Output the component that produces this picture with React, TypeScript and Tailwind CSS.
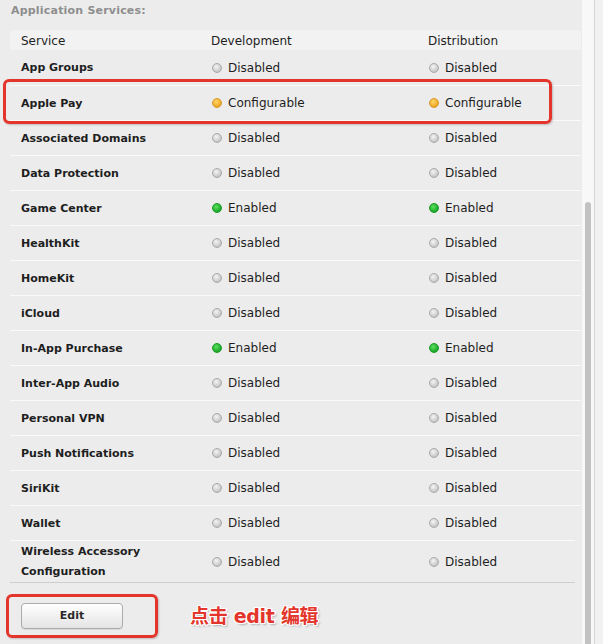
import React from 'react';

type Status = 'Disabled' | 'Configurable' | 'Enabled';

interface ServiceRow {
  name: string;
  dev: Status;
  dist: Status;
}

const services: ServiceRow[] = [
  { name: 'App Groups', dev: 'Disabled', dist: 'Disabled' },
  { name: 'Apple Pay', dev: 'Configurable', dist: 'Configurable' },
  { name: 'Associated Domains', dev: 'Disabled', dist: 'Disabled' },
  { name: 'Data Protection', dev: 'Disabled', dist: 'Disabled' },
  { name: 'Game Center', dev: 'Enabled', dist: 'Enabled' },
  { name: 'HealthKit', dev: 'Disabled', dist: 'Disabled' },
  { name: 'HomeKit', dev: 'Disabled', dist: 'Disabled' },
  { name: 'iCloud', dev: 'Disabled', dist: 'Disabled' },
  { name: 'In-App Purchase', dev: 'Enabled', dist: 'Enabled' },
  { name: 'Inter-App Audio', dev: 'Disabled', dist: 'Disabled' },
  { name: 'Personal VPN', dev: 'Disabled', dist: 'Disabled' },
  { name: 'Push Notifications', dev: 'Disabled', dist: 'Disabled' },
  { name: 'SiriKit', dev: 'Disabled', dist: 'Disabled' },
  { name: 'Wallet', dev: 'Disabled', dist: 'Disabled' },
];

const dotClass = (s: Status) => {
  if (s === 'Enabled') return 'bg-[radial-gradient(circle_at_40%_35%,#5ee05e,#1aa82a_70%)] border-[#1a9a26]';
  if (s === 'Configurable') return 'bg-[radial-gradient(circle_at_40%_35%,#ffd86a,#eda623_70%)] border-[#d9982a]';
  return 'bg-[radial-gradient(circle_at_40%_35%,#f4f4f4,#c4c4c4_75%)] border-[#a9a9a9]';
};

const StatusCell: React.FC<{ status: Status }> = ({ status }) => (
  <div className="flex items-center gap-[6px]">
    <span className={`inline-block w-[10px] h-[10px] rounded-full border ${dotClass(status)}`} />
    <span>{status}</span>
  </div>
);

export default function App() {
  return (
    <div
      className="w-[603px] h-[644px] bg-[#ececec] flex overflow-hidden text-[#1e1e1e] text-[12px]"
      style={{ fontFamily: '"DejaVu Sans", "Noto Sans CJK SC", sans-serif' }}
    >
      <div className="w-[582px] relative">
        <div className="pl-[11px] pt-[3px] h-[30px] text-[11px] font-bold text-[#8e8e8e] leading-[16px] tracking-[0.2px]">
          Application Services:
        </div>

        <div className="ml-[10px] w-[571px]">
          {/* Header */}
          <div className="flex h-[20px] items-center bg-[#f2f2f2] rounded-t-[4px] pt-[1px]">
            <div className="w-[201px] pl-[11px]">Service</div>
            <div className="w-[217px]">Development</div>
            <div className="flex-1">Distribution</div>
          </div>

          {services.map((row, i) => (
            <div
              key={row.name}
              className={`flex h-[35px] items-center ${i > 0 ? 'border-t border-[#fafafa]' : ''}`}
            >
              <div className="w-[201px] pl-[11px] pt-[2px] font-bold text-[11px]">{row.name}</div>
              <div className="w-[217px] pl-[1px]">
                <StatusCell status={row.dev} />
              </div>
              <div className="flex-1 pl-[1px]">
                <StatusCell status={row.dist} />
              </div>
            </div>
          ))}

          <div className="flex h-[43px] items-center border-t border-[#fafafa] border-b border-b-[#cdcdcd] mr-[6px]">
            <div className="w-[201px] pl-[11px] font-bold text-[11px] leading-[20px]">
              Wireless Accessory
              <br />
              Configuration
            </div>
            <div className="w-[217px] pl-[1px]">
              <StatusCell status="Disabled" />
            </div>
            <div className="flex-1 pl-[1px]">
              <StatusCell status="Disabled" />
            </div>
          </div>
        </div>

        <div className="flex items-center mt-[20px] ml-[21px]">
          <button className="w-[102px] h-[26px] rounded-[4px] border border-[#ababab] bg-gradient-to-b from-white to-[#e4e4e4] text-[11px] font-bold text-[#2a2a2a] shadow-[0_1px_0_rgba(0,0,0,0.08)]">
            Edit
          </button>
          <span
            className="ml-[67px] text-[19px] font-bold text-[#e3352b] leading-none tracking-[-0.3px]"
            style={{
              textShadow:
                '1px 0 0 #fff, -1px 0 0 #fff, 0 1px 0 #fff, 0 -1px 0 #fff, 1px 1px 0 #fff, -1px -1px 0 #fff, 1px -1px 0 #fff, -1px 1px 0 #fff, 2px 2px 2px rgba(0,0,0,0.25)',
            }}
          >
            点击 edit 编辑
          </span>
        </div>

        {/* annotation boxes */}
        <div className="absolute left-[3px] top-[79px] w-[549px] h-[45px] border-[3px] border-[#e3352b] rounded-[6px] shadow-[1px_1px_2px_rgba(0,0,0,0.2)]" />
        <div className="absolute left-[6px] top-[594px] w-[152px] h-[44px] border-[3px] border-[#e3352b] rounded-[6px] shadow-[1px_1px_2px_rgba(0,0,0,0.2)]" />
      </div>

      {/* scrollbar */}
      <div className="w-[13px] bg-[#f8f8f8] flex flex-col pt-[202px] px-[3px] border-r border-[#d6d6d6]">
        <div className="flex-1 bg-[#c2c2c2] rounded-t-[4px]" />
      </div>
      <div className="flex-1 bg-[#f1f1f1]" />
    </div>
  );
}
